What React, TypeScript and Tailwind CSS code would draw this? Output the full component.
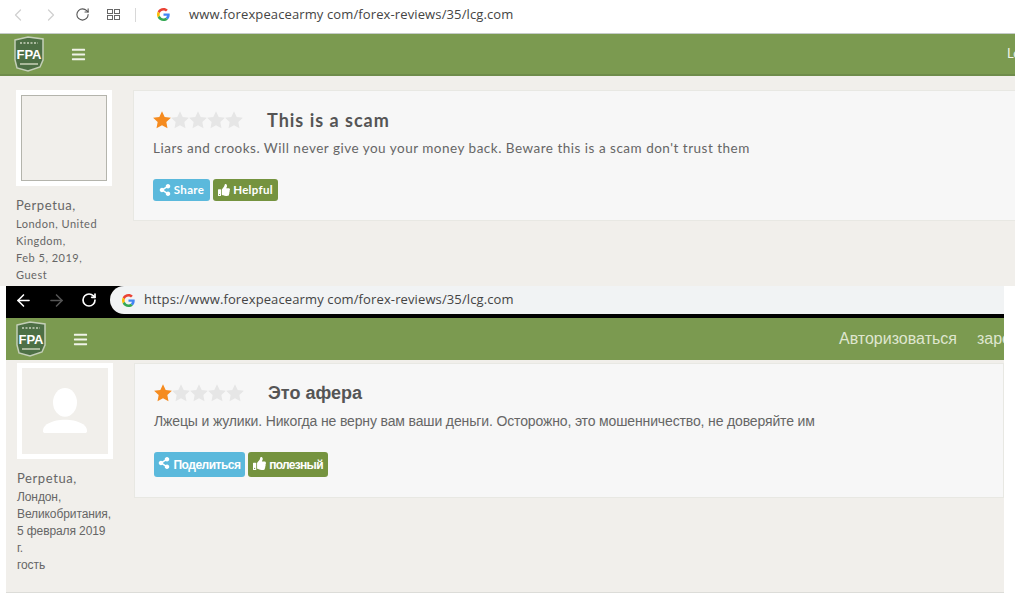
import { ArrowLeft, ArrowRight, ChevronLeft, ChevronRight, RotateCw } from "lucide-react";
import { FaBars, FaShareAlt, FaThumbsUp } from "react-icons/fa";

const STAR = "M12 1.5l3.2 6.9 7.5.9-5.5 5.2 1.4 7.5L12 18.4l-6.6 3.6 1.4-7.5L1.3 9.3l7.5-.9z";

function Stars() {
  return (
    <div className="flex -ml-px">
      {[0, 1, 2, 3, 4].map((i) => (
        <svg key={i} viewBox="0 0 24 24" className="w-[20px] h-[20px] -mr-[2px] shrink-0">
          <path d={STAR} fill={i === 0 ? "#f58b1f" : "#e6e6e6"} />
        </svg>
      ))}
    </div>
  );
}

function GoogleG({ size }: { size: number }) {
  return (
    <svg viewBox="0 0 48 48" width={size} height={size}>
      <path fill="#EA4335" d="M24 9.5c3.5 0 6.700 1.300 9.100 3.500l6.800-6.800C35.800 2.400 30.300 0 24 0 14.600 0 6.500 5.400 2.600 13.200l7.900 6.100C12.400 13.600 17.700 9.500 24 9.500z" />
      <path fill="#4285F4" d="M46.900 24.500c0-1.600-.1-3.100-.4-4.500H24v9h12.900c-.6 3-2.200 5.500-4.700 7.200l7.600 5.900c4.400-4.100 7.100-10.200 7.100-17.600z" />
      <path fill="#FBBC05" d="M10.500 28.700C10 27.200 9.800 25.600 9.800 24s.3-3.200.7-4.700l-7.900-6.100C.9 16.400 0 20.100 0 24s.9 7.600 2.600 10.800z" />
      <path fill="#34A853" d="M24 48c6.500 0 11.900-2.100 15.800-5.800l-7.600-5.900c-2.100 1.400-4.900 2.300-8.200 2.300-6.300 0-11.600-4.200-13.500-9.900l-7.900 6.100C6.500 42.600 14.600 48 24 48z" />
    </svg>
  );
}

function Logo() {
  return (
    <svg viewBox="0 0 32 36" className="w-[32px] h-[36px] shrink-0">
      <path d="M2 4 L15 1 L30 3 L30 24 L27 31 L15 35 L4 32 L2 24 Z" fill="#4d6f45" stroke="#c4cfb8" strokeWidth="1.500" />
      <path d="M7 7h18" stroke="#c9d3bd" strokeWidth="1.500" strokeDasharray="2 1.500" />
      <text x="16" y="23" textAnchor="middle" fontSize="13" fontWeight="700" fill="#fff" fontFamily="Liberation Sans, sans-serif">FPA</text>
      <path d="M7 28h18" stroke="#a9b89a" strokeWidth="2" />
    </svg>
  );
}

export default function App() {
  return (
    <div className="w-[1015px] h-[602px] overflow-hidden bg-white font-['Lato',sans-serif]">
      {/* Top capture */}
      <div className="h-[286px] overflow-hidden">
        <div className="h-[34px] flex items-center pl-[8px] pb-[4px] border-b border-[#c5cbc8]">
          <ChevronLeft className="w-[20px] h-[20px] text-[#d0d0d0]" strokeWidth={1.5} />
          <ChevronRight className="w-[20px] h-[20px] text-[#d0d0d0] ml-[13px]" strokeWidth={1.5} />
          <RotateCw className="w-[15px] h-[15px] text-[#555] ml-[14px]" strokeWidth={1.75} />
          <div className="ml-[17px] grid grid-cols-2 gap-[1px]">
            <div className="w-[6px] h-[5px] border border-[#666]" />
            <div className="w-[6px] h-[5px] border border-[#666]" />
            <div className="w-[6px] h-[5px] border border-[#666]" />
            <div className="w-[6px] h-[5px] border border-[#666]" />
          </div>
          <div className="ml-[15px] w-px h-[14px] bg-[#d8d8d8]" />
          <div className="ml-[21px]">
            <GoogleG size={13} />
          </div>
          <span className="ml-[19px] text-[13px] tracking-[0.12px] text-[#444] font-['Open_Sans',sans-serif]">www.forexpeacearmy com/forex-reviews/35/lcg.com</span>
        </div>
        <div className="h-[42px] bg-[#7b9a50] flex items-center pl-[13px] border-b-2 border-b-[#6f8c4b] overflow-hidden">
          <Logo />
          <FaBars className="ml-[26px] text-[#f0f3e8] w-[15px] h-[15px] shrink-0" />
          <span className="ml-[921px] text-[13px] text-[#f0f3e8]">Login</span>
        </div>
        <div className="h-[210px] bg-[#f1efeb] flex pl-[16px] pt-[14px]">
          <div className="w-[96px] shrink-0 text-[#666]">
            <div className="w-[96px] h-[96px] bg-white p-[5px]">
              <div className="w-full h-full border border-[#b4b4ac] bg-[#f1efeb]" />
            </div>
            <div className="mt-[10px] text-[13px] leading-[18px] tracking-[0.6px]">Perpetua,</div>
            <div className="text-[11px] leading-[17px] tracking-[0.5px] mt-[1px]">
              London, United Kingdom,
              <br />
              Feb 5, 2019,
              <br />
              Guest
            </div>
          </div>
          <div className="ml-[21px] w-[900px] h-[131px] shrink-0 bg-[#f7f7f7] border border-[#e8e8e3] pl-[19px] pt-[20px]">
            <div className="flex items-center h-[18px]">
              <Stars />
              <h2 className="ml-[25px] text-[18px] font-bold tracking-[1px] text-[#555]">This is a scam</h2>
            </div>
            <p className="mt-[10px] text-[13.5px] leading-[18px] tracking-[0.5px] text-[#666]">
              Liars and crooks. Will never give you your money back. Beware this is a scam don't trust them
            </p>
            <div className="mt-[22px] flex gap-[3px] h-[22px]">
              <button className="w-[57px] rounded-[3px] bg-[#5bb9dc] text-white text-[11.5px] tracking-[0.3px] font-bold flex items-center justify-center gap-[3px]">
                <FaShareAlt className="w-[12px] h-[12px]" />
                Share
              </button>
              <button className="w-[65px] rounded-[3px] bg-[#75933f] text-white text-[11.5px] tracking-[0.3px] font-bold flex items-center justify-center gap-[3px]">
                <FaThumbsUp className="w-[12px] h-[12px]" />
                Helpful
              </button>
            </div>
          </div>
        </div>
      </div>

      {/* Translated capture */}
      <div className="ml-[6px] w-[998px] h-[307px] overflow-hidden font-['Liberation_Sans',sans-serif]">
        <div className="h-[32px] bg-black flex pb-[4px]">
          <div className="w-[104px] flex items-center pl-[8px] gap-[14px]">
            <ArrowLeft className="w-[19px] h-[19px] text-white" strokeWidth={2} />
            <ArrowRight className="w-[19px] h-[19px] text-[#555]" strokeWidth={2} />
            <RotateCw className="w-[16px] h-[16px] text-white ml-[1px]" strokeWidth={2.5} />
          </div>
          <div className="flex-1 rounded-l-full bg-[#f1f3f4] flex items-center pl-[12px] gap-[9px]">
            <GoogleG size={13} />
            <span className="text-[13px] tracking-[0.12px] text-[#444] font-['Open_Sans',sans-serif]">https://www.forexpeacearmy com/forex-reviews/35/lcg.com</span>
          </div>
        </div>
        <div className="h-[42px] bg-[#7b9a50] flex items-center pl-[9px] overflow-hidden">
          <Logo />
          <FaBars className="ml-[26px] text-[#f0f3e8] w-[15px] h-[15px] shrink-0" />
          <div className="ml-[751px] flex gap-[20px] shrink-0 text-[16px] text-[#dfe6cf] whitespace-nowrap">
            <span>Авторизоваться</span>
            <span>зарегистрироваться</span>
          </div>
        </div>
        <div className="h-[233px] bg-[#f1efeb] flex pl-[11px] border-b border-[#dcdcd8]">
          <div className="w-[96px] shrink-0 text-[#666] pt-[3px]">
            <div className="w-[96px] h-[96px] bg-white p-[5px]">
              <div className="w-full h-full bg-[#f1efeb] flex items-center justify-center">
                <svg viewBox="0 0 48 48" className="w-[46px] h-[46px]">
                  <ellipse cx="24" cy="15" rx="12.500" ry="15" fill="#fff" />
                  <path d="M1 45c0-6 6-9 14-11 5-1 13-1 18 0 8 2 14 5 14 11 0 1-1 2-2 2H3c-1 0-2-1-2-2z" fill="#fff" />
                </svg>
              </div>
            </div>
            <div className="mt-[10px] text-[13px] leading-[18px] tracking-[0.6px] font-['Lato',sans-serif]">Perpetua,</div>
            <div className="text-[12px] leading-[17px] mt-[2px] w-[96px] tracking-[-0.1px]">
              Лондон, Великобритания,
              <br />
              5 февраля 2019 г.
              <br />
              гость
            </div>
          </div>
          <div className="ml-[21px] flex-1 h-[135px] mt-[3px] bg-[#f7f7f7] border border-[#e8e8e3] pl-[19px] pt-[20px]">
            <div className="flex items-center h-[18px]">
              <Stars />
              <h2 className="ml-[25px] text-[18px] font-bold text-[#555]">Это афера</h2>
            </div>
            <p className="mt-[10px] text-[14px] leading-[18px] tracking-[-0.14px] text-[#666]">
              Лжецы и жулики. Никогда не верну вам ваши деньги. Осторожно, это мошенничество, не доверяйте им
            </p>
            <div className="mt-[22px] flex gap-[3px] h-[25px]">
              <button className="w-[91px] rounded-[3px] bg-[#5bb9dc] text-white text-[12px] tracking-[-0.5px] font-bold flex items-center justify-center gap-[3px]">
                <FaShareAlt className="w-[12px] h-[12px] -mt-[3px]" />
                Поделиться
              </button>
              <button className="w-[80px] rounded-[3px] bg-[#75933f] text-white text-[12px] tracking-[-0.7px] font-bold flex items-center justify-center gap-[3px]">
                <FaThumbsUp className="w-[13px] h-[13px] -mt-[3px]" />
                полезный
              </button>
            </div>
          </div>
        </div>
      </div>
    </div>
  );
}
